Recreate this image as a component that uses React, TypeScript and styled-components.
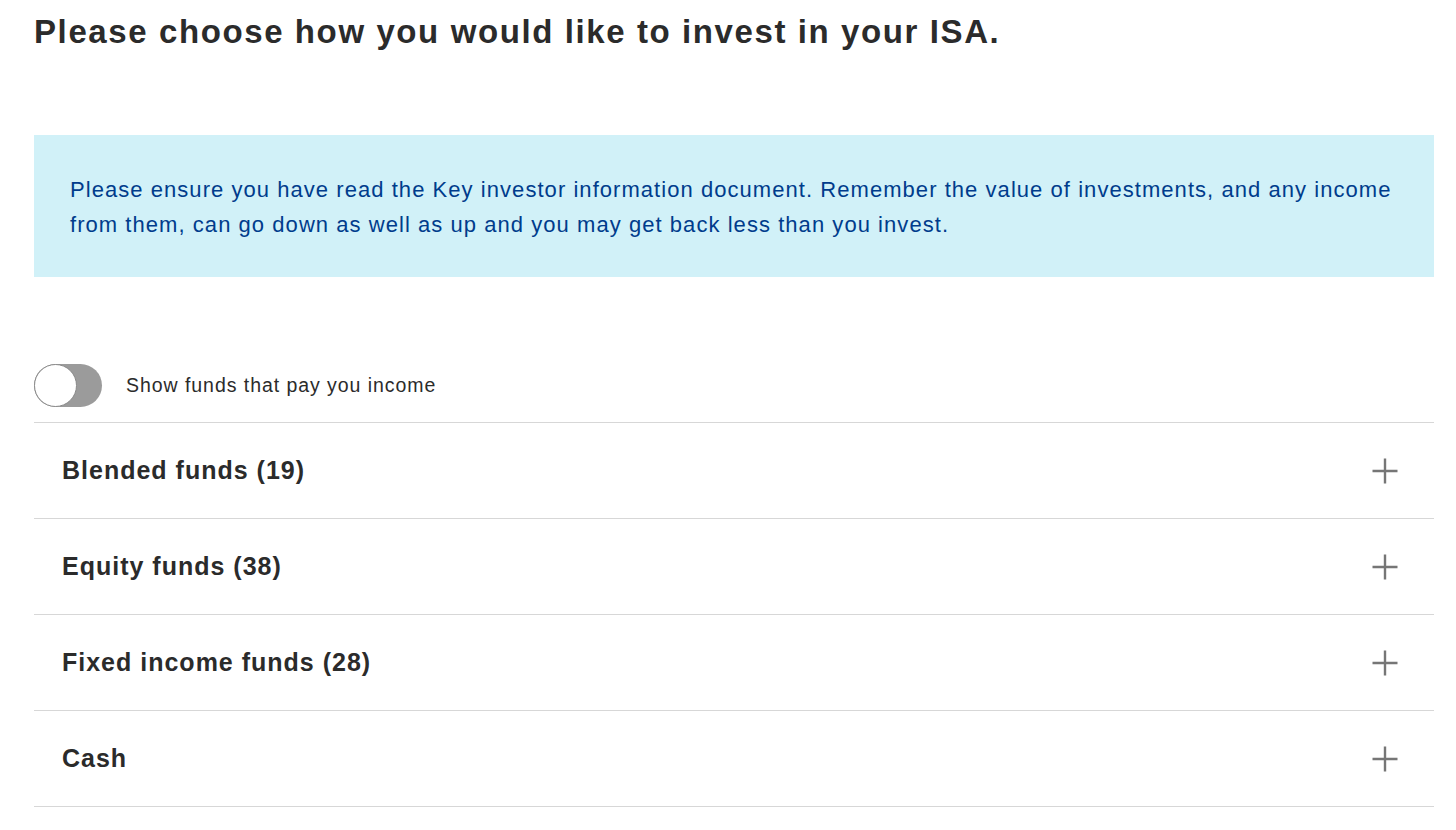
import { useState } from "react";
import styled, { createGlobalStyle } from "styled-components";

const GlobalStyle = createGlobalStyle`
  body {
    margin: 0;
    background: #ffffff;
    font-family: "Liberation Sans", Arial, sans-serif;
    color: #2b2b2b;
  }
`;

const Page = styled.div`
  padding: 0 22px 0 34px;
`;

const Heading = styled.h1`
  margin: 0;
  padding-top: 13px;
  font-size: 33px;
  font-weight: 700;
  line-height: 38px;
  letter-spacing: 1.6px;
  color: #2b2b2b;
`;

const Notice = styled.div`
  margin-top: 84px;
  padding: 37px 36px 35px;
  background-color: #d1f1f8;
  color: #003c8c;
  font-size: 22px;
  line-height: 35px;
  letter-spacing: 1.05px;
`;

const ToggleRow = styled.label`
  display: flex;
  align-items: center;
  gap: 24px;
  margin-top: 87px;
  padding-bottom: 15px;
  font-size: 19.5px;
  letter-spacing: 0.95px;
  color: #2b2b2b;
  cursor: pointer;
`;

const Track = styled.span<{ $on: boolean }>`
  position: relative;
  display: inline-block;
  flex-shrink: 0;
  width: 68px;
  height: 43px;
  border-radius: 22px;
  background-color: ${(p) => (p.$on ? "#00847f" : "#9b9b9b")};
`;

const Knob = styled.span<{ $on: boolean }>`
  position: absolute;
  top: 0;
  left: ${(p) => (p.$on ? "25px" : "0")};
  width: 41px;
  height: 41px;
  border-radius: 50%;
  border: 1px solid #8a8a8a;
  background-color: #ffffff;
`;

const List = styled.ul`
  margin: 0;
  padding: 0;
  list-style: none;
  border-top: 1px solid #d7d7d7;
`;

const Row = styled.li`
  display: flex;
  align-items: center;
  justify-content: space-between;
  height: 95px;
  padding: 0 36px 0 28px;
  border-bottom: 1px solid #d7d7d7;
`;

const RowTitle = styled.span`
  font-size: 25px;
  font-weight: 700;
  letter-spacing: 1px;
  color: #2b2b2b;
`;

const PlusIcon = () => (
  <svg width="26" height="26" viewBox="0 0 26 26">
    <path d="M13 0.5v25M0.5 13h25" stroke="#767676" strokeWidth="2.4" fill="none" />
  </svg>
);

const groups = [
  "Blended funds (19)",
  "Equity funds (38)",
  "Fixed income funds (28)",
  "Cash",
];

export default function App() {
  const [income, setIncome] = useState(false);

  return (
    <Page>
      <GlobalStyle />
      <Heading>Please choose how you would like to invest in your ISA.</Heading>
      <Notice>
        Please ensure you have read the Key investor information document. Remember the value of
        investments, and any income from them, can go down as well as up and you may get back less
        than you invest.
      </Notice>
      <ToggleRow onClick={() => setIncome(!income)}>
        <Track $on={income}>
          <Knob $on={income} />
        </Track>
        Show funds that pay you income
      </ToggleRow>
      <List>
        {groups.map((g) => (
          <Row key={g}>
            <RowTitle>{g}</RowTitle>
            <PlusIcon />
          </Row>
        ))}
      </List>
    </Page>
  );
}
